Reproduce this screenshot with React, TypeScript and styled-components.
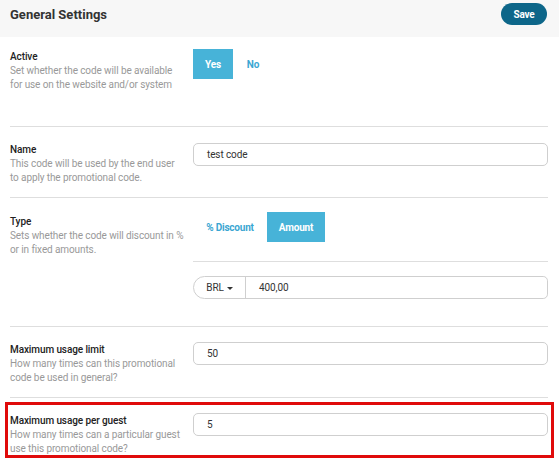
import React from "react";
import styled, { createGlobalStyle } from "styled-components";

const Global = createGlobalStyle`
  html, body { margin: 0; padding: 0; background: #fff; }
  body { font-family: Roboto, "Liberation Sans", Arial, sans-serif; color: #333; }
  * { box-sizing: border-box; }
`;

const Page = styled.div`
  width: 559px;
  height: 467px;
  overflow: hidden;
  background: #fff;
`;

const Header = styled.header`
  height: 37px;
  background: #f7f7f7;
  display: flex;
  align-items: flex-start;
  justify-content: space-between;
  padding: 3px 12px 0 10px;
`;

const Title = styled.h1`
  margin: 4px 0 0;
  font-size: 13px;
  font-weight: 700;
  color: #333;
  line-height: 16px;
`;

const SaveButton = styled.button`
  width: 46px;
  height: 22px;
  border: none;
  border-radius: 11px;
  background: #0d6689;
  color: #fff;
  font-family: inherit;
  font-size: 10px;
  font-weight: 700;
  letter-spacing: -0.2px;
  padding: 0;
  cursor: pointer;
`;

const Form = styled.div`
  padding: 0 11px 0 10px;
`;

const Section = styled.section<{ $pt: number; $pb: number }>`
  display: grid;
  grid-template-columns: 183px 1fr;
  padding: ${(p) => p.$pt}px 0 ${(p) => p.$pb}px;
  border-bottom: 1px solid #dedede;
`;

const Highlight = styled.div`
  margin: 4px -6px 0 -5px;
  border: 3px solid #e00b0b;
  padding: 7px 3px 0 2px;
  display: grid;
  grid-template-columns: 183px 1fr;
`;

const Info = styled.div`
  padding-top: 2px;
`;

const Label = styled.div`
  font-size: 10px;
  font-weight: 500;
  letter-spacing: -0.1px;
  color: #222;
  line-height: 14px;
`;

const Desc = styled.div`
  font-size: 10px;
  letter-spacing: -0.1px;
  color: #999;
  line-height: 13.5px;
  white-space: nowrap;
`;

const Control = styled.div<{ $mt?: number }>`
  margin-top: ${(p) => p.$mt ?? 0}px;
  display: flex;
  flex-direction: column;
`;

const Toggle = styled.div`
  display: flex;
`;

const ToggleButton = styled.button<{ $active?: boolean; $w: number }>`
  width: ${(p) => p.$w}px;
  height: 30px;
  border: none;
  padding: 0;
  background: ${(p) => (p.$active ? "#47b3d8" : "transparent")};
  color: ${(p) => (p.$active ? "#fff" : "#3aa6d2")};
  font-family: inherit;
  font-size: 10px;
  font-weight: 700;
  letter-spacing: -0.2px;
  cursor: pointer;
`;

const Input = styled.div`
  height: 23px;
  border: 1px solid #cfcfcf;
  border-radius: 5px;
  display: flex;
  align-items: center;
  padding-left: 13px;
  font-size: 10px;
  letter-spacing: -0.1px;
  color: #333;
`;

const SubBlock = styled.div`
  margin-top: 19px;
  border-top: 1px solid #dedede;
  padding-top: 14px;
`;

const Group = styled.div`
  height: 23px;
  border: 1px solid #cfcfcf;
  border-radius: 12px 5px 5px 12px;
  display: flex;
  align-items: stretch;
  font-size: 10px;
  letter-spacing: -0.1px;
  color: #333;
`;

const Addon = styled.div`
  width: 52px;
  border-right: 1px solid #cfcfcf;
  display: flex;
  align-items: center;
  justify-content: center;
  gap: 3px;
`;

const Caret = styled.span`
  width: 0;
  height: 0;
  border-left: 3px solid transparent;
  border-right: 3px solid transparent;
  border-top: 3px solid #333;
  margin-top: 1px;
`;

const GroupValue = styled.div`
  display: flex;
  align-items: center;
  padding-left: 13px;
`;

function FieldInfo({ label, lines }: { label: string; lines: string[] }) {
  return (
    <Info>
      <Label>{label}</Label>
      <Desc>
        {lines.map((l, i) => (
          <React.Fragment key={i}>
            {i > 0 && <br />}
            {l}
          </React.Fragment>
        ))}
      </Desc>
    </Info>
  );
}

export default function App() {
  return (
    <Page>
      <Global />
      <Header>
        <Title>General Settings</Title>
        <SaveButton>Save</SaveButton>
      </Header>
      <Form>
        <Section $pt={11} $pb={35}>
          <FieldInfo
            label="Active"
            lines={["Set whether the code will be available", "for use on the website and/or system"]}
          />
          <Control $mt={1}>
            <Toggle>
              <ToggleButton $active $w={40}>Yes</ToggleButton>
              <ToggleButton $w={40}>No</ToggleButton>
            </Toggle>
          </Control>
        </Section>

        <Section $pt={14} $pb={13}>
          <FieldInfo
            label="Name"
            lines={["This code will be used by the end user", "to apply the promotional code."]}
          />
          <Control $mt={2}>
            <Input>test code</Input>
          </Control>
        </Section>

        <Section $pt={15} $pb={27}>
          <FieldInfo
            label="Type"
            lines={["Sets whether the code will discount in %", "or in fixed amounts."]}
          />
          <Control $mt={-1}>
            <Toggle>
              <ToggleButton $w={74}>% Discount</ToggleButton>
              <ToggleButton $active $w={58}>Amount</ToggleButton>
            </Toggle>
            <SubBlock>
              <Group>
                <Addon>
                  BRL <Caret />
                </Addon>
                <GroupValue>400,00</GroupValue>
              </Group>
            </SubBlock>
          </Control>
        </Section>

        <Section $pt={14} $pb={13}>
          <FieldInfo
            label="Maximum usage limit"
            lines={["How many times can this promotional", "code be used in general?"]}
          />
          <Control $mt={1}>
            <Input>50</Input>
          </Control>
        </Section>

        <Highlight>
          <FieldInfo
            label="Maximum usage per guest"
            lines={["How many times can a particular guest", "use this promotional code?"]}
          />
          <Control $mt={1}>
            <Input>5</Input>
          </Control>
        </Highlight>
      </Form>
    </Page>
  );
}
